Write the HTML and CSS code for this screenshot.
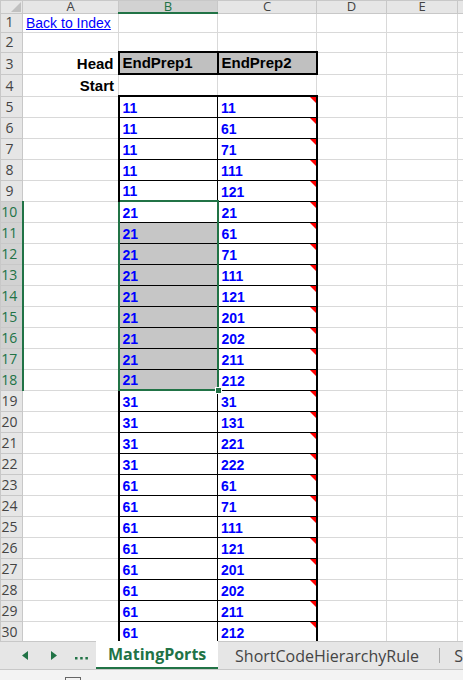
FILE: index.html
```html
<!DOCTYPE html>
<html lang="en">
<head>
    <meta charset="UTF-8">
    <meta name="viewport" content="width=device-width, initial-scale=1.0">
    <title>MatingPorts</title>
    <link rel="stylesheet" href="styles.css">
</head>
<body>
    <div class="sheet">
        <table class="grid">
            <colgroup>
                <col class="c-hdr"><col class="c-a"><col class="c-b"><col class="c-c"><col class="c-d"><col class="c-e"><col class="c-f">
            </colgroup>
            <tr class="r-head">
                <th class="corner"></th><th class="col">A</th><th class="col on">B</th><th class="col">C</th><th class="col">D</th><th class="col">E</th><th class="col">F</th>
            </tr>
            <tr class="r1"><th class="row">1</th><td><a class="link" href="#">Back to Index</a></td><td></td><td></td><td></td><td></td><td></td></tr>
            <tr class="r2"><th class="row">2</th><td></td><td></td><td></td><td></td><td></td><td></td></tr>
            <tr class="r3"><th class="row">3</th><td class="lbl">Head</td><td class="hd">EndPrep1</td><td class="hd">EndPrep2</td><td></td><td></td><td></td></tr>
            <tr class="r3"><th class="row">4</th><td class="lbl">Start</td><td></td><td></td><td></td><td></td><td></td></tr>

            <tr class="first"><th class="row">5</th><td></td><td class="v vb">11</td><td class="v vc">11</td><td></td><td></td><td></td></tr>
            <tr><th class="row">6</th><td></td><td class="v vb">11</td><td class="v vc">61</td><td></td><td></td><td></td></tr>
            <tr><th class="row">7</th><td></td><td class="v vb">11</td><td class="v vc">71</td><td></td><td></td><td></td></tr>
            <tr><th class="row">8</th><td></td><td class="v vb">11</td><td class="v vc">111</td><td></td><td></td><td></td></tr>
            <tr><th class="row">9</th><td></td><td class="v vb">11</td><td class="v vc">121</td><td></td><td></td><td></td></tr>

            <!-- selected range B10:B18 -->
            <tr><th class="row on">10</th><td></td><td class="v vb sel sel-top">21</td><td class="v vc">21</td><td></td><td></td><td></td></tr>
            <tr><th class="row on">11</th><td></td><td class="v vb sel shade">21</td><td class="v vc">61</td><td></td><td></td><td></td></tr>
            <tr><th class="row on">12</th><td></td><td class="v vb sel shade">21</td><td class="v vc">71</td><td></td><td></td><td></td></tr>
            <tr><th class="row on">13</th><td></td><td class="v vb sel shade">21</td><td class="v vc">111</td><td></td><td></td><td></td></tr>
            <tr><th class="row on">14</th><td></td><td class="v vb sel shade">21</td><td class="v vc">121</td><td></td><td></td><td></td></tr>
            <tr><th class="row on">15</th><td></td><td class="v vb sel shade">21</td><td class="v vc">201</td><td></td><td></td><td></td></tr>
            <tr><th class="row on">16</th><td></td><td class="v vb sel shade">21</td><td class="v vc">202</td><td></td><td></td><td></td></tr>
            <tr><th class="row on">17</th><td></td><td class="v vb sel shade">21</td><td class="v vc">211</td><td></td><td></td><td></td></tr>
            <tr><th class="row on">18</th><td></td><td class="v vb sel shade sel-bot">21</td><td class="v vc">212</td><td></td><td></td><td></td></tr>

            <tr><th class="row">19</th><td></td><td class="v vb">31</td><td class="v vc">31</td><td></td><td></td><td></td></tr>
            <tr><th class="row">20</th><td></td><td class="v vb">31</td><td class="v vc">131</td><td></td><td></td><td></td></tr>
            <tr><th class="row">21</th><td></td><td class="v vb">31</td><td class="v vc">221</td><td></td><td></td><td></td></tr>
            <tr><th class="row">22</th><td></td><td class="v vb">31</td><td class="v vc">222</td><td></td><td></td><td></td></tr>
            <tr><th class="row">23</th><td></td><td class="v vb">61</td><td class="v vc">61</td><td></td><td></td><td></td></tr>
            <tr><th class="row">24</th><td></td><td class="v vb">61</td><td class="v vc">71</td><td></td><td></td><td></td></tr>
            <tr><th class="row">25</th><td></td><td class="v vb">61</td><td class="v vc">111</td><td></td><td></td><td></td></tr>
            <tr><th class="row">26</th><td></td><td class="v vb">61</td><td class="v vc">121</td><td></td><td></td><td></td></tr>
            <tr><th class="row">27</th><td></td><td class="v vb">61</td><td class="v vc">201</td><td></td><td></td><td></td></tr>
            <tr><th class="row">28</th><td></td><td class="v vb">61</td><td class="v vc">202</td><td></td><td></td><td></td></tr>
            <tr><th class="row">29</th><td></td><td class="v vb">61</td><td class="v vc">211</td><td></td><td></td><td></td></tr>
            <tr><th class="row">30</th><td></td><td class="v vb">61</td><td class="v vc">212</td><td></td><td></td><td></td></tr>
        </table>
    </div>

    <div class="tabs">
        <div class="nav">
            <svg class="arrow" width="6" height="9" viewBox="0 0 6 9"><path d="M6 0 L0 4.5 L6 9 Z"/></svg>
            <svg class="arrow" width="6" height="9" viewBox="0 0 6 9"><path d="M0 0 L6 4.5 L0 9 Z"/></svg>
            <svg class="dots" width="13" height="3" viewBox="0 0 13 3"><rect x="0" y="0" width="2.5" height="2.5"/><rect x="5.2" y="0" width="2.5" height="2.5"/><rect x="10.4" y="0" width="2.5" height="2.5"/></svg>
        </div>
        <div class="tab active">MatingPorts</div>
        <div class="tab">ShortCodeHierarchyRule</div>
        <div class="tab more">S</div>
    </div>

    <div class="status">
        <span class="status-box"></span>
    </div>
</body>
</html>
```

FILE: styles.css
```css
body {
    margin: 0;
    width: 463px;
    height: 680px;
    overflow: hidden;
    background: #fff;
    font-family: 'Liberation Sans', Arial, sans-serif;
}

/* ---- worksheet grid ---- */

.sheet {
    height: 641px;
    overflow: hidden;
}

.grid {
    border-collapse: collapse;
    table-layout: fixed;
    width: 480px;
}

.c-hdr { width: 22px; }
.c-a { width: 96px; }
.c-b { width: 99px; }
.c-c { width: 99px; }
.c-d { width: 70px; }
.c-e { width: 71px; }
.c-f { width: 23px; }

.r-head { height: 12px; }
.r1 { height: 19px; }
.r2 { height: 20px; }
.r3 { height: 22px; }
tr { height: 21px; }

th {
    background: #e6e6e6;
    color: #444;
    font-family: 'Open Sans', sans-serif;
    font-weight: normal;
    font-size: 14px;
    border: 1px solid #c8c8c8;
    padding: 0;
    white-space: nowrap;
}

th.col {
    font-size: 13px;
    line-height: 11px;
    vertical-align: top;
    text-align: center;
}

th.row {
    line-height: 16px;
    vertical-align: bottom;
    text-align: center;
    padding: 0 4px 2px 0;
    overflow: hidden;
}

th.on {
    background: #d2d2d2;
    color: #217346;
}

th.col.on {
    border-bottom: 2px solid #217346;
}

th.row.on {
    border-right: 2px solid #217346;
}

.corner {
    position: relative;
}

.corner::after {
    content: "";
    position: absolute;
    right: 1px;
    bottom: 1px;
    border-top: 10px solid transparent;
    border-right: 10px solid #c0c0c0;
}

td {
    border: 1px solid #d9d9d9;
    padding: 0 3px 1px;
    font-size: 14px;
    line-height: 16px;
    vertical-align: bottom;
    white-space: nowrap;
    overflow: hidden;
}

.link {
    color: #0000ff;
    text-decoration: underline;
}

.lbl {
    text-align: right;
    font-weight: bold;
    font-size: 15px;
    padding: 0 4px 2px 0;
}

.hd {
    background: #c0c0c0;
    border: 2px solid #000;
    font-weight: bold;
    font-size: 15px;
    padding-bottom: 2px;
}

/* value block B5:C30 */
.v {
    border: 1px solid #000;
    color: #0000ff;
    font-weight: bold;
}

.vb { border-left: 2px solid #000; }

.vc {
    border-right: 2px solid #000;
    position: relative;
}

/* comment marker */
.vc::after {
    content: "";
    position: absolute;
    top: 0;
    right: 0;
    border-top: 6px solid #f00;
    border-left: 6px solid transparent;
}

.first td.v { border-top: 2px solid #000; }

.sel {
    border-left: 2px solid #217346;
    border-right: 2px solid #217346;
}

.sel-top { border-top: 2px solid #217346; }

.sel-bot {
    border-bottom: 2px solid #217346;
    position: relative;
    overflow: visible;
}

/* fill handle */
.sel-bot::after {
    content: "";
    position: absolute;
    right: -5px;
    bottom: -5px;
    width: 5px;
    height: 5px;
    background: #217346;
    border: 1px solid #fff;
    z-index: 2;
}

.shade { background: #c6c6c6; }

/* ---- sheet tabs ---- */

.tabs {
    height: 29px;
    background: #e6e6e6;
    border-top: 1px solid #c8c8c8;
    border-bottom: 1px solid #c8c8c8;
    display: flex;
    box-sizing: border-box;
    font-family: 'Open Sans', sans-serif;
    font-size: 16px;
}

.nav {
    width: 97px;
    display: flex;
    align-items: center;
    padding-left: 22px;
    box-sizing: border-box;
    fill: #217346;
}

.arrow { margin-right: 23px; }

.dots { margin-top: 6px; margin-left: -5px; }

.tab {
    display: flex;
    align-items: center;
    color: #444;
    white-space: nowrap;
}

.tab.active {
    width: 123px;
    justify-content: center;
    background: #fff;
    color: #217346;
    font-weight: bold;
    margin-top: -1px;
    border-bottom: 2px solid #217346;
    box-sizing: border-box;
}

.tab.active + .tab {
    padding: 0 17px;
    width: 224px;
    box-sizing: border-box;
    border-right: 1px solid #aaa;
    margin: 6px 0;
}

.tab.more {
    padding-left: 14px;
}

/* ---- status bar ---- */

.status {
    height: 11px;
    background: #f3f3f3;
    overflow: hidden;
}

.status-box {
    display: block;
    margin: 7px 0 0 65px;
    width: 14px;
    height: 12px;
    border: 1px solid #666;
}
```
